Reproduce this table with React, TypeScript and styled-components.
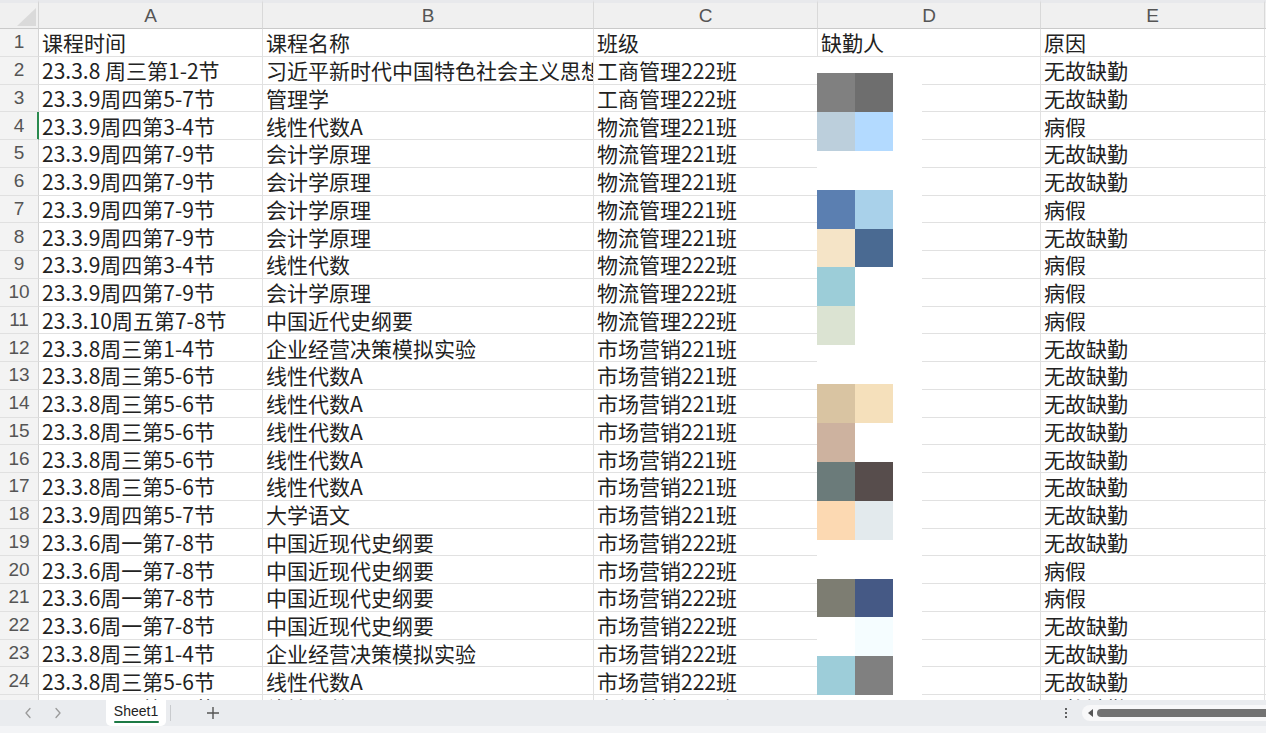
import React from "react";
import styled, { createGlobalStyle } from "styled-components";

const GlobalStyle = createGlobalStyle`
  html, body { margin: 0; padding: 0; background: #ffffff; overflow: hidden; }
  * { box-sizing: border-box; }
`;

const Page = styled.div`
  width: 1266px;
  height: 733px;
  display: flex;
  flex-direction: column;
  overflow: hidden;
`;

const SheetArea = styled.div`
  position: relative;
  height: 700px;
  overflow: hidden;
  flex: none;
`;

const Grid = styled.div`
  display: grid;
  grid-template-columns: 39px 224px 331px 224px 223px 224px 200px;
  grid-template-rows: 29px repeat(25, 27.75px);
  width: 1465px;
`;

const Corner = styled.div`
  position: relative;
  background: #f0f0f0;
  border-top: 3px solid #e8e9ec;
  border-right: 1px solid #d4d4d4;
  border-bottom: 1px solid #cacaca;
  &::after {
    content: "";
    position: absolute;
    right: 2px;
    bottom: 2px;
    width: 0;
    height: 0;
    border-style: solid;
    border-width: 0 0 18px 19px;
    border-color: transparent transparent #dadada transparent;
  }
`;

const ColHead = styled.div`
  background: #f0f0f0;
  border-top: 3px solid #e8e9ec;
  border-right: 1px solid #d9d9d9;
  border-bottom: 1px solid #cacaca;
  display: flex;
  align-items: center;
  justify-content: center;
  font-family: "Liberation Sans", Arial, sans-serif;
  font-size: 19px;
  line-height: 25px;
  color: #555555;
`;

const RowHead = styled.div<{ $active?: boolean }>`
  background: #f3f3f3;
  border-right: 1px solid ${(p) => (p.$active ? "#2a8a4f" : "#d4d4d4")};
  box-shadow: ${(p) => (p.$active ? "inset -1px 0 0 #2a8a4f" : "none")};
  border-bottom: 1px solid #e0e0e0;
  display: flex;
  align-items: center;
  justify-content: center;
  font-family: "Liberation Sans", Arial, sans-serif;
  font-size: 19px;
  line-height: 26px;
  color: #555555;
`;

const Cell = styled.div`
  border-right: 1px solid #e1e1e1;
  border-bottom: 1px solid #e1e1e1;
  padding-left: 3px;
  font-family: "Noto Sans CJK SC", "Noto Sans", sans-serif;
  font-size: 21px;
  line-height: 26px;
  color: #222222;
  white-space: nowrap;
  overflow: hidden;
  display: flex;
  align-items: center;
`;

const Mosaic = styled.div`
  position: absolute;
  left: 817px;
  top: 57px;
  width: 105px;
  height: 643px;
  background: #ffffff;
  padding-top: 16px;
  display: grid;
  grid-template-columns: 38px 38px;
  grid-auto-rows: 38.9px;
  align-content: start;
`;

const Block = styled.div<{ $c: string }>`
  background: ${(p) => p.$c};
`;

const TabBar = styled.div`
  flex: none;
  height: 33px;
  background: #eaecef;
  border-bottom: 7px solid #f3f4f6;
  display: flex;
  align-items: stretch;
  padding-left: 13px;
`;

const NavButton = styled.div`
  width: 30px;
  display: flex;
  align-items: center;
  justify-content: center;
`;

const Tab = styled.div`
  margin-left: 33px;
  width: 60px;
  background: #ffffff;
  border-radius: 0 0 5px 5px;
  display: flex;
  flex-direction: column;
  align-items: center;
  justify-content: center;
  gap: 2px;
`;

const TabLabel = styled.span`
  font-family: "Liberation Sans", Arial, sans-serif;
  font-size: 14px;
  line-height: 16px;
  color: #222222;
`;

const TabUnderline = styled.span`
  width: 45px;
  height: 2px;
  background: #1d7a45;
  border-radius: 1px;
`;

const Separator = styled.div`
  width: 1px;
  margin: 5px 0 5px 4px;
  background: #c9cbce;
`;

const PlusButton = styled.div`
  margin-left: 32px;
  width: 20px;
  display: flex;
  align-items: center;
  justify-content: center;
`;

const RightTools = styled.div`
  margin-left: auto;
  display: flex;
  align-items: center;
`;

const Dots = styled.div`
  width: 16px;
  display: flex;
  flex-direction: column;
  align-items: center;
  gap: 2px;
  margin-right: 8px;
`;

const Dot = styled.span`
  width: 2px;
  height: 2px;
  border-radius: 1px;
  background: #333;
`;

const ScrollTrack = styled.div`
  width: 184px;
  height: 16px;
  background: #f8f8f9;
  border-radius: 8px 0 0 8px;
  display: flex;
  align-items: center;
  padding-left: 6px;
`;

const ScrollArrow = styled.span`
  width: 0;
  height: 0;
  border-style: solid;
  border-width: 4px 5px 4px 0;
  border-color: transparent #555 transparent transparent;
  margin-right: 4px;
`;

const ScrollThumb = styled.div`
  flex: 1;
  height: 8px;
  background: #727272;
  border-radius: 4px 0 0 4px;
`;

type Row = [string, string, string, string];

const rows: Row[] = [
  ["课程时间", "课程名称", "班级", "原因"],
  ["23.3.8 周三第1-2节", "习近平新时代中国特色社会主义思想概论", "工商管理222班", "无故缺勤"],
  ["23.3.9周四第5-7节", "管理学", "工商管理222班", "无故缺勤"],
  ["23.3.9周四第3-4节", "线性代数A", "物流管理221班", "病假"],
  ["23.3.9周四第7-9节", "会计学原理", "物流管理221班", "无故缺勤"],
  ["23.3.9周四第7-9节", "会计学原理", "物流管理221班", "无故缺勤"],
  ["23.3.9周四第7-9节", "会计学原理", "物流管理221班", "病假"],
  ["23.3.9周四第7-9节", "会计学原理", "物流管理221班", "无故缺勤"],
  ["23.3.9周四第3-4节", "线性代数", "物流管理222班", "病假"],
  ["23.3.9周四第7-9节", "会计学原理", "物流管理222班", "病假"],
  ["23.3.10周五第7-8节", "中国近代史纲要", "物流管理222班", "病假"],
  ["23.3.8周三第1-4节", "企业经营决策模拟实验", "市场营销221班", "无故缺勤"],
  ["23.3.8周三第5-6节", "线性代数A", "市场营销221班", "无故缺勤"],
  ["23.3.8周三第5-6节", "线性代数A", "市场营销221班", "无故缺勤"],
  ["23.3.8周三第5-6节", "线性代数A", "市场营销221班", "无故缺勤"],
  ["23.3.8周三第5-6节", "线性代数A", "市场营销221班", "无故缺勤"],
  ["23.3.8周三第5-6节", "线性代数A", "市场营销221班", "无故缺勤"],
  ["23.3.9周四第5-7节", "大学语文", "市场营销221班", "无故缺勤"],
  ["23.3.6周一第7-8节", "中国近现代史纲要", "市场营销222班", "无故缺勤"],
  ["23.3.6周一第7-8节", "中国近现代史纲要", "市场营销222班", "病假"],
  ["23.3.6周一第7-8节", "中国近现代史纲要", "市场营销222班", "病假"],
  ["23.3.6周一第7-8节", "中国近现代史纲要", "市场营销222班", "无故缺勤"],
  ["23.3.8周三第1-4节", "企业经营决策模拟实验", "市场营销222班", "无故缺勤"],
  ["23.3.8周三第5-6节", "线性代数A", "市场营销222班", "无故缺勤"],
  ["23.3.8周三第5-6节", "线性代数", "市场营销222班", "无故缺勤"],
];

const mosaic: string[] = [
  "#808080", "#6e6e6e",
  "#bccfdc", "#b3daff",
  "#ffffff", "#ffffff",
  "#5b7fb1", "#a9d1ea",
  "#f5e4c7", "#4a6a92",
  "#9ccdd8", "#ffffff",
  "#dbe3d2", "#ffffff",
  "#ffffff", "#ffffff",
  "#d9c4a2", "#f5e0bb",
  "#cdb29f", "#ffffff",
  "#6b7b7a", "#574d4c",
  "#fcd9b2", "#e3eaed",
  "#ffffff", "#ffffff",
  "#7d7d72", "#455985",
  "#ffffff", "#f5fdff",
  "#9dcdd9", "#808080",
];

const cols = ["A", "B", "C", "D", "E", "F"];

const Chevron = ({ dir }: { dir: "l" | "r" }) => (
  <svg width="8" height="12" viewBox="0 0 8 12">
    <path
      d={dir === "l" ? "M6 1.5 L2 6 L6 10.5" : "M2 1.5 L6 6 L2 10.5"}
      fill="none"
      stroke="#9a9a9a"
      strokeWidth="1.3"
      strokeLinecap="round"
      strokeLinejoin="round"
    />
  </svg>
);

const Plus = () => (
  <svg width="14" height="14" viewBox="0 0 14 14">
    <path d="M7 1 V13 M1 7 H13" stroke="#555" strokeWidth="1.4" />
  </svg>
);

export default function App() {
  return (
    <>
      <GlobalStyle />
      <Page>
        <SheetArea>
          <Grid>
            <Corner />
            {cols.map((c) => (
              <ColHead key={c}>{c}</ColHead>
            ))}
            {rows.map((r, i) => (
              <React.Fragment key={i}>
                <RowHead $active={i === 3}>{i + 1}</RowHead>
                <Cell>{r[0]}</Cell>
                <Cell>{r[1]}</Cell>
                <Cell>{r[2]}</Cell>
                <Cell>{i === 0 ? "缺勤人" : ""}</Cell>
                <Cell>{r[3]}</Cell>
                <Cell />
              </React.Fragment>
            ))}
          </Grid>
          <Mosaic>
            {mosaic.map((c, i) => (
              <Block key={i} $c={c} />
            ))}
          </Mosaic>
        </SheetArea>
        <TabBar>
          <NavButton>
            <Chevron dir="l" />
          </NavButton>
          <NavButton>
            <Chevron dir="r" />
          </NavButton>
          <Tab>
            <TabLabel>Sheet1</TabLabel>
            <TabUnderline />
          </Tab>
          <Separator />
          <PlusButton>
            <Plus />
          </PlusButton>
          <RightTools>
            <Dots>
              <Dot />
              <Dot />
              <Dot />
            </Dots>
            <ScrollTrack>
              <ScrollArrow />
              <ScrollThumb />
            </ScrollTrack>
          </RightTools>
        </TabBar>
      </Page>
    </>
  );
}
